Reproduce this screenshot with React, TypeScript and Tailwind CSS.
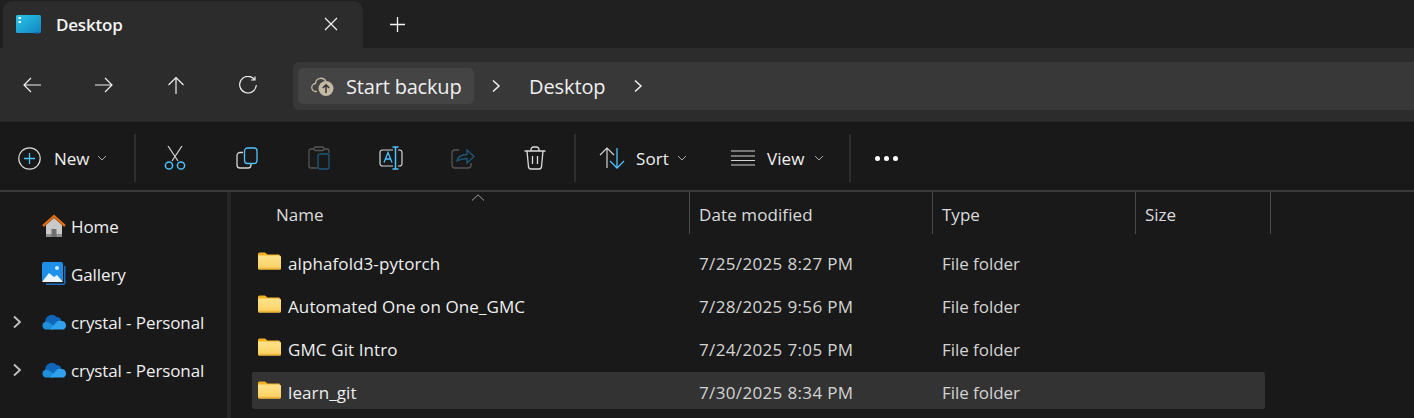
import React from "react";

const Divider = () => <div className="w-[2px] h-[48px] bg-[#2e2e2e] shrink-0" />;

const Chevron = ({ gap = "ml-[8px]" }: { gap?: string }) => (
  <svg width="10" height="6" viewBox="0 0 10 6" className={gap} fill="none" stroke="#a8a8a8" strokeWidth="1">
    <path d="M1 1l4 4 4-4" />
  </svg>
);

const Crumb = () => (
  <svg width="10" height="14" viewBox="0 0 10 14" fill="none" stroke="#f0f0f0" strokeWidth="1.5">
    <path d="M2 1.500l6 5.500-6 5.500" />
  </svg>
);

const Folder = () => (
  <svg width="23" height="18" viewBox="0 0 23 18" className="shrink-0 mb-[2px]">
    <defs>
      <linearGradient id="fold" x1="0" y1="0" x2="0" y2="1">
        <stop offset="0" stopColor="#fee28a" />
        <stop offset="1" stopColor="#fbd161" />
      </linearGradient>
    </defs>
    <path d="M0 2a1.500 1.500 0 0 1 1.500-1.500h5.500l2.500 2h12v6H0z" fill="#f4b01f" />
    <path d="M0 3.500h21.500a1.500 1.500 0 0 1 1.500 1.500v11a1.500 1.500 0 0 1-1.500 1.500h-20A1.500 1.500 0 0 1 0 16z" fill="url(#fold)" />
    <path d="M0 15.800h23v.2a1.500 1.500 0 0 1-1.500 1.500h-20A1.500 1.500 0 0 1 0 16z" fill="#efb43a" />
  </svg>
);

const OneDrive = () => (
  <svg width="24" height="16" viewBox="0 0 24 16">
    <path d="M3.500 9a6.500 6.500 0 0 1 11-6 5 5 0 0 1 5 4.500l-8 5z" fill="#0f66b8" />
    <path d="M4 15.500a4 4 0 0 1-1.500-7.500c1.700-.6 3.500-.2 5 .8l6 4-3 2.700z" fill="#1f8ddb" />
    <path d="M8 15.500l6-7c1.500-1.500 3-2 5-1.500a4.500 4.500 0 0 1 2.500 8.500z" fill="#2ea2ec" />
  </svg>
);

const SideItem = ({ icon, label, arrow }: { icon: React.ReactNode; label: string; arrow?: boolean }) => (
  <div className="h-[48px] flex items-center">
    <div className="w-[42px] flex justify-center pl-[3px] pr-[11px]">
      {arrow && (
        <svg width="10" height="14" viewBox="0 0 10 14" fill="none" stroke="#c4c4c4" strokeWidth="1.800">
          <path d="M2 1.500l6 5.500-6 5.500" />
        </svg>
      )}
    </div>
    <div className="w-[29px] flex">{icon}</div>
    <span className="text-[17px] tracking-[-0.1px] text-[#efefef] whitespace-nowrap mt-[1px]">{label}</span>
  </div>
);

const files = [
  ["alphafold3-pytorch", "7/25/2025 8:27 PM"],
  ["Automated One on One_GMC", "7/28/2025 9:56 PM"],
  ["GMC Git Intro", "7/24/2025 7:05 PM"],
  ["learn_git", "7/30/2025 8:34 PM"],
];

export default function App() {
  return (
    <div className="w-[1414px] h-[418px] overflow-hidden bg-[#191919] text-white flex flex-col font-['Open_Sans','Noto_Sans',sans-serif]">
      {/* tab strip */}
      <div className="h-[48px] bg-[#202020] flex items-end shrink-0 pl-[3px]">
        <div className="w-[360px] h-[47px] bg-[#2c2c2c] rounded-t-[10px] flex items-center pl-[13px]">
          <svg width="25" height="19" viewBox="0 0 25 19" className="mr-[15px]">
            <defs>
              <linearGradient id="desk" x1="0" y1="0" x2="1" y2="1">
                <stop offset="0" stopColor="#2cc4e6" />
                <stop offset="1" stopColor="#0f86c4" />
              </linearGradient>
            </defs>
            <rect x="0" y="0" width="25" height="18" rx="1.500" fill="url(#desk)" />
            <rect x="19" y="17" width="4" height="1.800" fill="#1566a8" />
            <rect x="2.500" y="2" width="2.500" height="2" fill="#e6f7fc" />
            <rect x="2.500" y="6" width="2.500" height="2" fill="#e6f7fc" />
          </svg>
          <span className="text-[17px] font-semibold tracking-[-0.2px] text-[#f5f5f5]">Desktop</span>
          <svg width="14" height="14" viewBox="0 0 14 14" className="ml-auto mr-[25px] mb-[1px]" fill="none" stroke="#f0f0f0" strokeWidth="1.200">
            <path d="M1 1l12 12M13 1L1 13" />
          </svg>
        </div>
        <div className="h-[47px] flex items-center ml-[27px]">
          <svg width="15" height="15" viewBox="0 0 15 15" fill="none" stroke="#f5f5f5" strokeWidth="1.300">
            <path d="M7.500 0v15M0 7.500h15" />
          </svg>
        </div>
      </div>

      {/* nav row */}
      <div className="h-[74px] bg-[#2c2c2c] flex items-center shrink-0 border-b border-[#272727] pt-[2px]">
        <div className="w-[293px] flex items-center pl-[23px] gap-[54px] shrink-0 mb-[1px]">
          <svg width="18" height="16" viewBox="0 0 18 16" fill="none" stroke="#efefef" strokeWidth="1.200"><path d="M18 8H1M8 1L1 8l7 7" /></svg>
          <svg width="18" height="16" viewBox="0 0 18 16" fill="none" stroke="#efefef" strokeWidth="1.200"><path d="M0 8h17M10 1l7 7-7 7" /></svg>
          <svg width="18" height="18" viewBox="0 0 18 18" fill="none" stroke="#efefef" strokeWidth="1.200"><path d="M9 18V1M1.500 9L9 1.500 16.500 9" /></svg>
          <svg width="18" height="18" viewBox="0 0 18 18" fill="none" stroke="#efefef" strokeWidth="1.200"><path d="M15.500 3.500A8.300 8.300 0 1 0 17.300 9M16 .5v3.500h-4" /></svg>
        </div>
        <div className="flex-1 h-[48px] bg-[#383838] rounded-l-[6px] flex items-center pl-[5px]">
          <div className="w-[176px] h-[36px] bg-[#444444] rounded-[5px] flex items-center pl-[13px]">
            <svg width="24" height="22" viewBox="0 0 24 22" className="mr-[11px] shrink-0">
              <path d="M6 16.500H5a4 4 0 0 1-.5-8A5.500 5.500 0 0 1 15 6.500" fill="none" stroke="#c4b9a3" strokeWidth="1.300" />
              <circle cx="15" cy="13.500" r="7.500" fill="#c4b9a3" />
              <path d="M15 18v-8M11.800 13L15 9.800 18.200 13" fill="none" stroke="#333" strokeWidth="1.500" />
            </svg>
            <span className="text-[20px] tracking-[-0.18px] text-[#f0f0f0] whitespace-nowrap mt-[3px]">Start backup</span>
          </div>
          <div className="ml-[17px]"><Crumb /></div>
          <span className="ml-[28px] text-[20px] tracking-[-0.1px] text-[#f0f0f0] mt-[3px]">Desktop</span>
          <div className="ml-[28px]"><Crumb /></div>
        </div>
      </div>

      {/* toolbar */}
      <div className="h-[70px] flex items-center shrink-0 border-b-[2px] border-[#3b3b3b] pt-[4px]">
        <div className="w-[134px] flex items-center pl-[18px] shrink-0">
          <svg width="23" height="23" viewBox="0 0 23 23" fill="none" className="mr-[13px]">
            <circle cx="11.500" cy="11.500" r="10.700" stroke="#d8d8d8" strokeWidth="1.200" />
            <path d="M11.500 6v11M6 11.500h11" stroke="#4cc2ff" strokeWidth="1.300" />
          </svg>
          <span className="text-[17px] tracking-[-0.1px] text-[#f0f0f0] mt-[2px]">New</span>
          <Chevron />
        </div>
        <Divider />
        <div className="flex items-center pl-[28px] gap-[50px]">
          <svg width="22" height="24" viewBox="0 0 22 24" fill="none" strokeWidth="1.200">
            <path d="M4 0l10 15M18 0L8 15" stroke="#d4d4d4" />
            <circle cx="5" cy="19.500" r="3.600" stroke="#4cc2ff" strokeWidth="1.500" />
            <circle cx="17" cy="19.500" r="3.600" stroke="#4cc2ff" strokeWidth="1.500" />
          </svg>
          <svg width="22" height="22" viewBox="0 0 22 22" fill="none">
            <path d="M7 5.500H4A3 3 0 0 0 1 8.500V18a3 3 0 0 0 3 3h8a3 3 0 0 0 3-3v-1" stroke="#d4d4d4" strokeWidth="1.300" />
            <rect x="8.500" y="1" width="12.500" height="15.500" rx="3" stroke="#4cc2ff" strokeWidth="1.300" />
          </svg>
          <svg width="22" height="24" viewBox="0 0 22 24" fill="none">
            <path d="M6 3H3a2 2 0 0 0-2 2v15a2 2 0 0 0 2 2h6M16 3h3a2 2 0 0 1 2 2v2" stroke="#555" strokeWidth="1.300" />
            <rect x="6" y="1" width="10" height="3.500" rx="1.500" stroke="#555" strokeWidth="1.300" />
            <rect x="10" y="8" width="11" height="15" rx="2" stroke="#1f5a7c" strokeWidth="1.300" />
          </svg>
          <svg width="24" height="24" viewBox="0 0 24 24" fill="none" className="ml-[-1px]">
            <path d="M14 4H3.500A2.500 2.500 0 0 0 1 6.500v11A2.500 2.500 0 0 0 3.500 20H14M19 4h1.500A2.500 2.500 0 0 1 23 6.500v11a2.500 2.500 0 0 1-2.500 2.500H19" stroke="#d4d4d4" strokeWidth="1.200" />
            <path d="M5 16.500l4-10 4 10M6.500 13h5" stroke="#4cc2ff" strokeWidth="1.300" />
            <path d="M16.500 1v22M13.500 1h6M13.500 23h6" stroke="#4cc2ff" strokeWidth="1.500" />
          </svg>
          <svg width="24" height="22" viewBox="0 0 24 22" fill="none" className="ml-[-2px]">
            <path d="M8 3H4a3 3 0 0 0-3 3v12a3 3 0 0 0 3 3h13a3 3 0 0 0 3-3v-2" stroke="#555" strokeWidth="1.300" />
            <path d="M6 14c1-4 5-6.500 10-6.500V3l7 6.500-7 6.500v-4.500c-4 0-7 1-10 2.500z" stroke="#1f5a7c" strokeWidth="1.300" />
          </svg>
          <svg width="22" height="24" viewBox="0 0 22 24" fill="none" stroke="#dcdcdc" strokeWidth="1.300" className="ml-[-1px]">
            <path d="M0.500 5h21M7 5V3.500A2.500 2.500 0 0 1 9.500 1h3A2.500 2.500 0 0 1 15 3.500V5M3 5l1.500 16a2.500 2.500 0 0 0 2.500 2h8a2.500 2.500 0 0 0 2.500-2L19 5M8.500 10v8M13.500 10v8" />
          </svg>
        </div>
        <div className="ml-[28px]"><Divider /></div>
        <div className="flex items-center pl-[23px] shrink-0">
          <svg width="26" height="22" viewBox="0 0 26 22" fill="none" className="mr-[11px]">
            <path d="M8 21V1M1 8l7-7 7 7" stroke="#d4d4d4" strokeWidth="1.200" />
            <path d="M18 1v20M11 14l7 7 7-7" stroke="#4cc2ff" strokeWidth="1.300" />
          </svg>
          <span className="text-[17px] tracking-[0.1px] text-[#f0f0f0] mt-[2px]">Sort</span>
          <Chevron />
        </div>
        <div className="flex items-center ml-[44px] shrink-0">
          <svg width="24" height="16" viewBox="0 0 24 16" fill="none" stroke="#d4d4d4" strokeWidth="1.200" className="mr-[12px]">
            <path d="M0 1h24M0 6h24M0 10.500h24M0 15h24" />
          </svg>
          <span className="text-[17px] tracking-[0.1px] text-[#f0f0f0] mt-[2px]">View</span>
          <Chevron gap="ml-[9px]" />
        </div>
        <div className="ml-[25px]"><Divider /></div>
        <div className="flex gap-[4px] ml-[24px]">
          <div className="w-[5px] h-[5px] rounded-full bg-white" />
          <div className="w-[5px] h-[5px] rounded-full bg-white" />
          <div className="w-[5px] h-[5px] rounded-full bg-white" />
        </div>
      </div>

      {/* body */}
      <div className="flex-1 flex min-h-0">
        <div className="w-[227px] pt-[10px] shrink-0">
          <SideItem
            label="Home"
            icon={
              <svg width="24" height="24" viewBox="0 0 24 24">
                <path d="M4 11l8-7 8 7v11a1 1 0 0 1-1 1H5a1 1 0 0 1-1-1z" fill="#c9c9c9" />
                <path d="M4 20h16v2a1 1 0 0 1-1 1H5a1 1 0 0 1-1-1z" fill="#8f8f8f" />
                <rect x="9.500" y="15" width="5" height="8" fill="#6f6f6f" />
                <path d="M1 12L12 2l11 10" fill="none" stroke="#e06c10" strokeWidth="2.400" />
              </svg>
            }
          />
          <SideItem
            label="Gallery"
            icon={
              <svg width="24" height="24" viewBox="0 0 24 24">
                <path d="M23.500 4v17a2 2 0 0 1-2 2H4v-1.500h17.500a.5.5 0 0 0 .5-.5V4z" fill="#1a6fc4" />
                <rect x="0" y="0" width="21" height="20" rx="2" fill="#1e90e8" />
                <path d="M0 20l7-9 5 4 3-2 6 7z" fill="#eaf4fc" />
                <circle cx="15" cy="6" r="2" fill="#cfe8fb" />
              </svg>
            }
          />
          <SideItem label="crystal - Personal" arrow icon={<OneDrive />} />
          <SideItem label="crystal - Personal" arrow icon={<OneDrive />} />
        </div>
        <div className="w-[4px] bg-[#262626] shrink-0" />
        <div className="flex-1 min-w-0 relative">
          <svg width="14" height="7" viewBox="0 0 14 7" fill="none" stroke="#a0a0a0" strokeWidth="1" className="absolute left-[240px] top-[2px]">
            <path d="M1 6.500L7 .8l6 5.700" />
          </svg>
          <div className="h-[42px] flex text-[17px] text-[#dcdcdc]">
            <div className="w-[459px] flex items-center pl-[45px] pt-[3px] border-r border-[#4a4a4a]">Name</div>
            <div className="w-[243px] flex items-center pl-[9px] pt-[3px] tracking-[0.1px] border-r border-[#4a4a4a]">Date modified</div>
            <div className="w-[203px] flex items-center pl-[9px] pt-[3px] border-r border-[#4a4a4a]">Type</div>
            <div className="w-[135px] flex items-center pl-[9px] pt-[3px] border-r border-[#4a4a4a]">Size</div>
          </div>
          <div className="pt-[6px] pl-[21px]">
            {files.map(([name, date], i) => (
              <div key={name} className="w-[1013px] h-[43px] flex items-center">
                <div className={`w-full flex items-center h-[37px] rounded-[2px] ${i === 3 ? "bg-[#333333]" : ""}`}>
                  <div className="w-[436px] flex items-center pl-[6px] text-[17px] text-[#efefef]">
                    <Folder />
                    <span className="ml-[7px] tracking-[0.1px] whitespace-nowrap mt-[4px]">{name}</span>
                  </div>
                  <div className="w-[243px] pl-[11px] text-[17px] tracking-[0.35px] text-[#d4d4d4] whitespace-nowrap mt-[4px]">{date}</div>
                  <div className="pl-[11px] text-[17px] tracking-[-0.05px] text-[#d4d4d4] mt-[4px]">File folder</div>
                </div>
              </div>
            ))}
          </div>
        </div>
      </div>
    </div>
  );
}
